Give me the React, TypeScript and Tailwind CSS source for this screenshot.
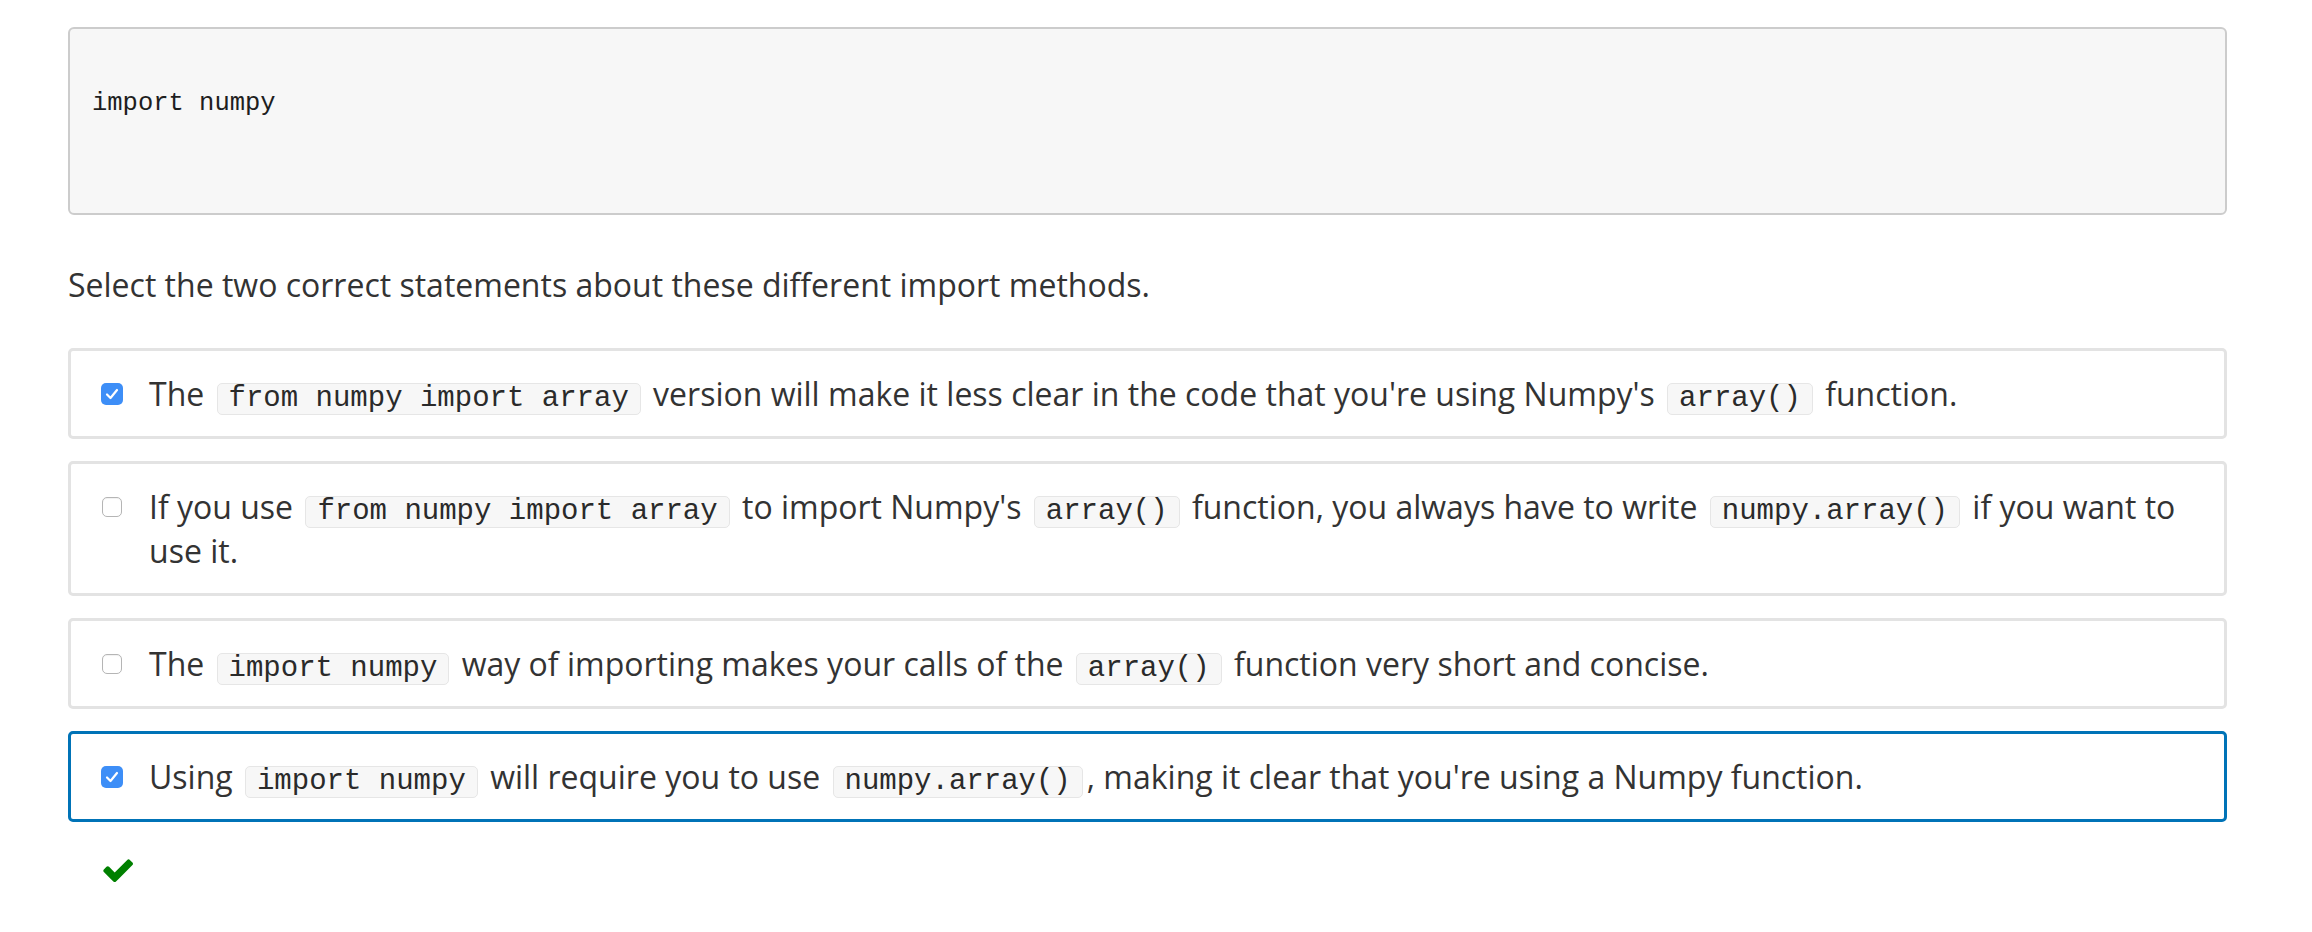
import React from "react";

const C = ({ children }: { children: React.ReactNode }) => (
  <code className="mx-[4px] inline-block rounded-[5px] border border-[#e6e6e6] bg-[#f7f7f7] px-[11px] py-0 align-baseline font-['Liberation_Mono',monospace] text-[29px] leading-[30px] text-[#2a2a2a]">
    {children}
  </code>
);

const Box = ({ checked }: { checked: boolean }) =>
  checked ? (
    <span className="mt-[11px] flex h-[22px] w-[22px] shrink-0 items-center justify-center rounded-[5px] bg-[#3d8ef7]">
      <svg width="14" height="12" viewBox="0 0 14 12" fill="none">
        <path d="M2 6.5 L5.5 10 L12 2" stroke="white" strokeWidth="2.2" strokeLinecap="round" strokeLinejoin="round" />
      </svg>
    </span>
  ) : (
    <span className="mt-[12px] ml-[1px] mr-[1px] block h-[20px] w-[20px] shrink-0 rounded-[5px] border border-[#b5b5b5] bg-white shadow-[inset_0_1px_1px_rgba(0,0,0,0.06)]" />
  );

const Option = ({
  checked,
  active,
  children,
}: {
  checked: boolean;
  active?: boolean;
  children: React.ReactNode;
}) => (
  <div
    className={
      active
        ? "flex items-start gap-[26px] rounded-[5px] border-[3px] border-[#0073b7] bg-white py-[20.5px] pl-[30px] pr-[30px]"
        : "flex items-start gap-[26px] rounded-[5px] border-[3px] border-[#e3e3e3] bg-white py-[20.5px] pl-[30px] pr-[30px]"
    }
  >
    <Box checked={checked} />
    <div className="leading-[44px]">{children}</div>
  </div>
);

export default function App() {
  return (
    <div className="min-h-[932px] bg-white font-['Open_Sans',sans-serif] text-[32px] text-[#333]">
      <div className="ml-[68px] w-[2159px] pt-[27px]">
        <pre className="h-[188px] rounded-[6px] border-2 border-[#cccccc] bg-[#f7f7f7] pl-[22px] pt-[60px] font-['Liberation_Mono',monospace] text-[25.5px] leading-[30px] text-[#1e1e1e]">
          import numpy
        </pre>
        <p className="mt-[48px] leading-[44px]">
          Select the two correct statements about these different import methods.
        </p>
        <div className="mt-[41px] flex flex-col gap-[22px]">
          <Option checked>
            The <C>from numpy import array</C> version will make it less clear in the code that you're using
            Numpy's <C>array()</C> function.
          </Option>
          <Option checked={false}>
            If you use <C>from numpy import array</C> to import Numpy's <C>array()</C> function, you always have to
            write <C>numpy.array()</C>
            <span> if you want to </span>
            <span>use it.</span>
          </Option>
          <Option checked={false}>
            The <C>import numpy</C> way of importing makes your calls of the <C>array()</C> function very short and
            concise.
          </Option>
          <Option checked active>
            Using <C>import numpy</C> will require you to use <C>numpy.array()</C>, making it clear that you're using a
            Numpy function.
          </Option>
        </div>
        <div className="mt-[35px] pl-[33px]">
          <svg width="32" height="28" viewBox="0 256 1671 1372" fill="#008000">
            <path d="M1671 566q0 40-28 68l-724 724-136 136q-28 28-68 28t-68-28l-136-136-362-362q-28-28-28-68t28-68l136-136q28-28 68-28t68 28l294 295 656-657q28-28 68-28t68 28l136 136q28 28 28 68z" />
          </svg>
        </div>
      </div>
    </div>
  );
}
